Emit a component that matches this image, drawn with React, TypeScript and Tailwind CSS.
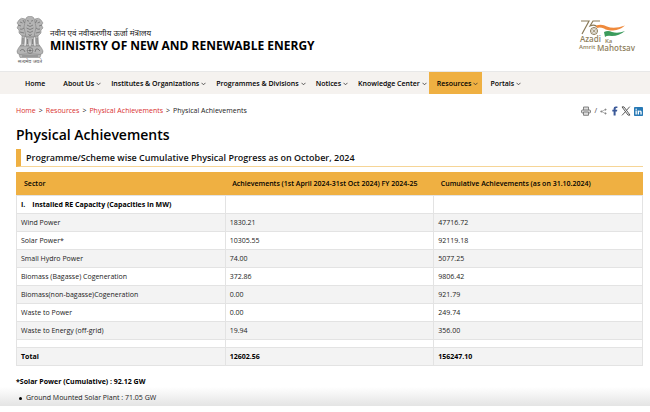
import React from 'react';

const NAV = [
  { label: 'About Us' },
  { label: 'Institutes & Organizations' },
  { label: 'Programmes & Divisions' },
  { label: 'Notices' },
  { label: 'Knowledge Center' },
  { label: 'Resources', active: true },
  { label: 'Portals' },
];

const ROWS = [
  ['Wind Power', '1830.21', '47716.72'],
  ['Solar Power*', '10305.55', '92119.18'],
  ['Small Hydro Power', '74.00', '5077.25'],
  ['Biomass (Bagasse) Cogeneration', '372.86', '9806.42'],
  ['Biomass(non-bagasse)Cogeneration', '0.00', '921.79'],
  ['Waste to Power', '0.00', '249.74'],
  ['Waste to Energy (off-grid)', '19.94', '356.00'],
];

function Emblem() {
  return (
    <svg viewBox="0 0 28 42" className="h-[42px] w-7" aria-hidden="true">
      <g fill="#b4b4b4" stroke="#7b7b7b" strokeWidth="0.5" strokeLinejoin="round">
        <path d="M9 3 Q5 1 3 4 L1 7 L2.500 9 L1 12 L3 14 L3 17 L6 20 L10 21 V7Z" />
        <path d="M19 3 Q23 1 25 4 L27 7 L25.500 9 L27 12 L25 14 L25 17 L22 20 L18 21 V7Z" />
        <path d="M10 2 L12 0.500 H16 L18 2 L19 6 L20 11 L18 21 H10 L8 11 L9 6Z" />
        <path d="M6 20 L5.500 28 L4 30 H8 L9 20Z" />
        <path d="M22 20 L22.500 28 L24 30 H20 L19 20Z" />
        <path d="M10.500 21 L10 30 H13 L13.500 21Z M14.500 21 L15 30 H18 L17.500 21Z" />
        <path d="M4 30 H24 L25.500 32 L27 35 Q27.500 38 24 38.500 H4 Q0.500 38 1 35 L2.500 32Z" />
        <path d="M3 38.500 Q14 37 25 38.500 L24 41.500 H4Z" />
      </g>
      <g fill="none" stroke="#5c5c5c" strokeWidth="0.6">
        <path d="M11 4.500 L13 5.200 M17 4.500 L15 5.200 M13 7 Q14 8 15 7 M11 9 Q14 12 17 9 M10.500 12 Q14 15 17.500 12 M11 15 Q14 18 17 15 M12.500 18 L14 20 L15.500 18" />
        <path d="M4 6 L6.500 7 M2 9 L5 10 M4 13 Q6 14 8 12 M4 16 L8 17 M7 4 L8.500 7 M24 6 L21.500 7 M26 9 L23 10 M24 13 Q22 14 20 12 M24 16 L20 17 M21 4 L19.500 7" />
        <path d="M7 22 V28 M11.500 23 V28 M16.500 23 V28 M21 22 V28" />
        <circle cx="14" cy="34.500" r="2.800" fill="#e2e2e2" />
        <path d="M14 31.700V37.300M11.200 34.500H16.800M12 32.500L16 36.500M16 32.500L12 36.500M4 35 Q6 32 8 34 L9 36 M19 36 L20 33 Q22 32 24 35" />
        <path d="M6 40H22" />
      </g>
    </svg>
  );
}

function AzadiLogo() {
  return (
    <svg viewBox="0 0 60 36" className="h-9 w-[60px]" role="img" aria-label="Azadi Ka Amrit Mahotsav">
      <path d="M3 3 H11 L4 16 M22 3 H15 L12 8 Q17 6 19 9" fill="none" stroke="#8a7a58" strokeWidth="1.2" />
      <path d="M18 7.500 Q24 5.500 29 8.500 Q36 11.500 47 7.500 Q42 12 35 12.500 Q29 12.500 26 10.500 Q22 9 19 10Z" fill="#ef8a3c" />
      <path d="M26 14 Q30 12 34 14 Q40 16 47 13 Q41 18 34 18 Q29 17 27 19Z" fill="#3b9b5c" />
      <circle cx="16" cy="13" r="3.500" fill="#fff" stroke="#8a7a58" strokeWidth="1" />
      <path d="M16 9.500V16.500M12.500 13H19.500M13.500 10.500L18.500 15.500M18.500 10.500L13.500 15.500" stroke="#8a7a58" strokeWidth="0.500" />
      <g fill="#8f7f5e" fontFamily="'Open Sans', sans-serif" fontWeight="600">
        <text x="2" y="24" fontSize="8">Azadi</text>
        <text x="27" y="25" fontSize="6">Ka</text>
        <text x="1" y="31" fontSize="6">Amrit</text>
        <text x="19" y="33" fontSize="8">Mahotsav</text>
      </g>
    </svg>
  );
}

function Chevron() {
  return (
    <svg viewBox="0 0 5 4" className="h-1 w-[5px]" fill="none" stroke="#333" strokeWidth="0.8" aria-hidden="true">
      <path d="M0.500 0.800 L2.500 2.800 L4.500 0.800" />
    </svg>
  );
}

function ShareTools() {
  return (
    <div className="flex items-center gap-[3px] text-[7px] text-[#333]">
      <button type="button" aria-label="Print">
        <svg viewBox="0 0 10 10" className="size-2.5" fill="#ddd" stroke="#777" strokeWidth="0.9">
          <path d="M2.500 4V1H7.500V4M2.500 7H1.500Q0.500 7 0.500 6V5Q0.500 4 1.500 4H8.500Q9.500 4 9.500 5V6Q9.500 7 8.500 7H7.500M2.500 6H7.500V9.300H2.500Z" />
        </svg>
      </button>
      <span>/</span>
      <button type="button" aria-label="Share">
        <svg viewBox="0 0 8 8" className="size-[7px]" fill="#888" stroke="#888" strokeWidth="0.7">
          <path d="M6.300 1.800L1.500 4L6.300 6.200" fill="none" />
          <circle cx="6.300" cy="1.800" r="0.800" />
          <circle cx="1.500" cy="4" r="0.800" />
          <circle cx="6.300" cy="6.200" r="0.800" />
        </svg>
      </button>
      <a href="#facebook" aria-label="Facebook" className="pl-0.5">
        <svg viewBox="0 0 6 10" className="h-2.5 w-1.5" fill="#3b5998">
          <path d="M1.600 9.500V5.500H0.300V3.800H1.600V2.500Q1.600 0.500 3.800 0.500H5.400V2.100H4.400Q3.600 2.100 3.600 2.900V3.800H5.300L5 5.500H3.600V9.500Z" />
        </svg>
      </a>
      <a href="#x" aria-label="X">
        <svg viewBox="0 0 10 10" className="size-2.5" fill="none" stroke="#333">
          <path d="M1 0.900H3L9 9.100H7Z" strokeWidth="0.8" />
          <path d="M8.800 0.600L5.500 4.300M4.400 5.700L1 9.400" strokeWidth="0.8" />
        </svg>
      </a>
      <a href="#linkedin" aria-label="LinkedIn">
        <svg viewBox="0 0 9 9" className="size-[9px]">
          <rect width="9" height="9" rx="0.800" fill="#2779b5" />
          <path d="M1.500 3.500H2.800V7.500H1.500ZM3.700 3.500H4.900V4.100Q5.300 3.400 6.200 3.400Q7.700 3.400 7.700 5V7.500H6.400V5.400Q6.400 4.500 5.700 4.500Q5 4.500 5 5.400V7.500H3.700Z" fill="#fff" />
          <circle cx="2.150" cy="2.200" r="0.700" fill="#fff" />
        </svg>
      </a>
    </div>
  );
}

export default function App() {
  return (
    <div className="bg-white pb-1.5 font-['Open_Sans','Noto_Sans',sans-serif] text-[7px] leading-[10px] text-[#222]">
      <header className="flex h-[71px] items-start justify-between pr-3 pl-4">
        <div className="flex">
          <div className="flex w-7 flex-col items-center pt-4">
            <Emblem />
            <span className="text-[5px] leading-[7px] whitespace-nowrap text-[#555]">सत्यमेव जयते</span>
          </div>
          <div className="pt-[27px] pl-1.5">
            <p className="text-[8px] leading-[11px]">नवीन एवं नवीकरणीय ऊर्जा मंत्रालय</p>
            <p className="text-[12px] leading-[15px] font-bold text-black">MINISTRY OF NEW AND RENEWABLE ENERGY</p>
          </div>
        </div>
        <div className="pt-[18px]">
          <AzadiLogo />
        </div>
      </header>

      <nav className="flex h-[23px] border-t border-[#e8e8e8] bg-[#f5f2ef] pl-4 font-semibold text-black">
        <a href="#home" className="flex items-center pt-0.5 pr-2.5 pl-[9px]">Home</a>
        {NAV.map((item) => (
          <a
            key={item.label}
            href="#menu"
            className={`flex items-center gap-0.5 pt-0.5 pl-2 whitespace-nowrap ${item.active ? 'bg-[#efb042] pr-1' : 'pr-0.5'}`}
          >
            {item.label}
            <Chevron />
          </a>
        ))}
      </nav>

      <main className="pr-[7px] pl-4">
        <div className="flex items-center justify-between pt-3">
          <div className="flex gap-[3px]">
            <a href="#home" className="text-[#d9302f]">Home</a>
            <span>&gt;</span>
            <a href="#resources" className="text-[#d9302f]">Resources</a>
            <span>&gt;</span>
            <a href="#achievements" className="text-[#d9302f]">Physical Achievements</a>
            <span>&gt;</span>
            <span>Physical Achievements</span>
          </div>
          <ShareTools />
        </div>

        <h1 className="pt-[9px] text-[14px] leading-5 font-semibold text-black">Physical Achievements</h1>
        <h2 className="mt-1 border-b border-l-[5px] border-b-[#f6d596] border-l-[#efb042] pl-[5px] text-[9px] leading-[17px] font-semibold text-[#111]">
          Programme/Scheme wise Cumulative Physical Progress as on October, 2024
        </h2>

        <table className="mt-[5px] w-full table-fixed border-collapse text-left">
          <thead>
            <tr className="h-[23px] border border-[#efb042] bg-[#efb042] text-black">
              <th className="pl-[7px] font-semibold">Sector</th>
              <th className="pl-[7px] font-semibold">Achievements (1st April 2024-31st Oct 2024) FY 2024-25</th>
              <th className="pl-[7px] font-semibold">Cumulative Achievements (as on 31.10.2024)</th>
            </tr>
          </thead>
          <tbody className="[&_td]:border [&_td]:border-[#e3e3e3] [&_td]:pl-1">
            <tr className="h-[18px] font-bold text-black">
              <td><span className="pr-[7px]">I.</span>Installed RE Capacity (Capacities in MW)</td>
              <td />
              <td />
            </tr>
            {ROWS.map((row) => (
              <tr key={row[0]} className="h-[18px] odd:bg-white even:bg-[#f3f3f3]">
                {row.map((cell, i) => (
                  <td key={i}>{cell}</td>
                ))}
              </tr>
            ))}
            <tr className="h-2">
              <td />
              <td />
              <td />
            </tr>
            <tr className="h-[18px] bg-[#f3f3f3] font-bold text-black">
              <td>Total</td>
              <td>12602.56</td>
              <td>156247.10</td>
            </tr>
          </tbody>
        </table>
      </main>

      <section className="mt-[11px] pl-4">
        <p className="font-bold text-black">*Solar Power (Cumulative) : 92.12 GW</p>
      </section>
      <div className="bg-linear-to-b from-white to-[#e4e4e4] pt-1.5 pb-[3px] pl-4">
        <ul>
          <li className="flex items-center gap-1 pl-[3px]">
            <span className="size-[3px] rounded-full bg-black" />
            Ground Mounted Solar Plant : 71.05 GW
          </li>
        </ul>
      </div>
    </div>
  );
}
